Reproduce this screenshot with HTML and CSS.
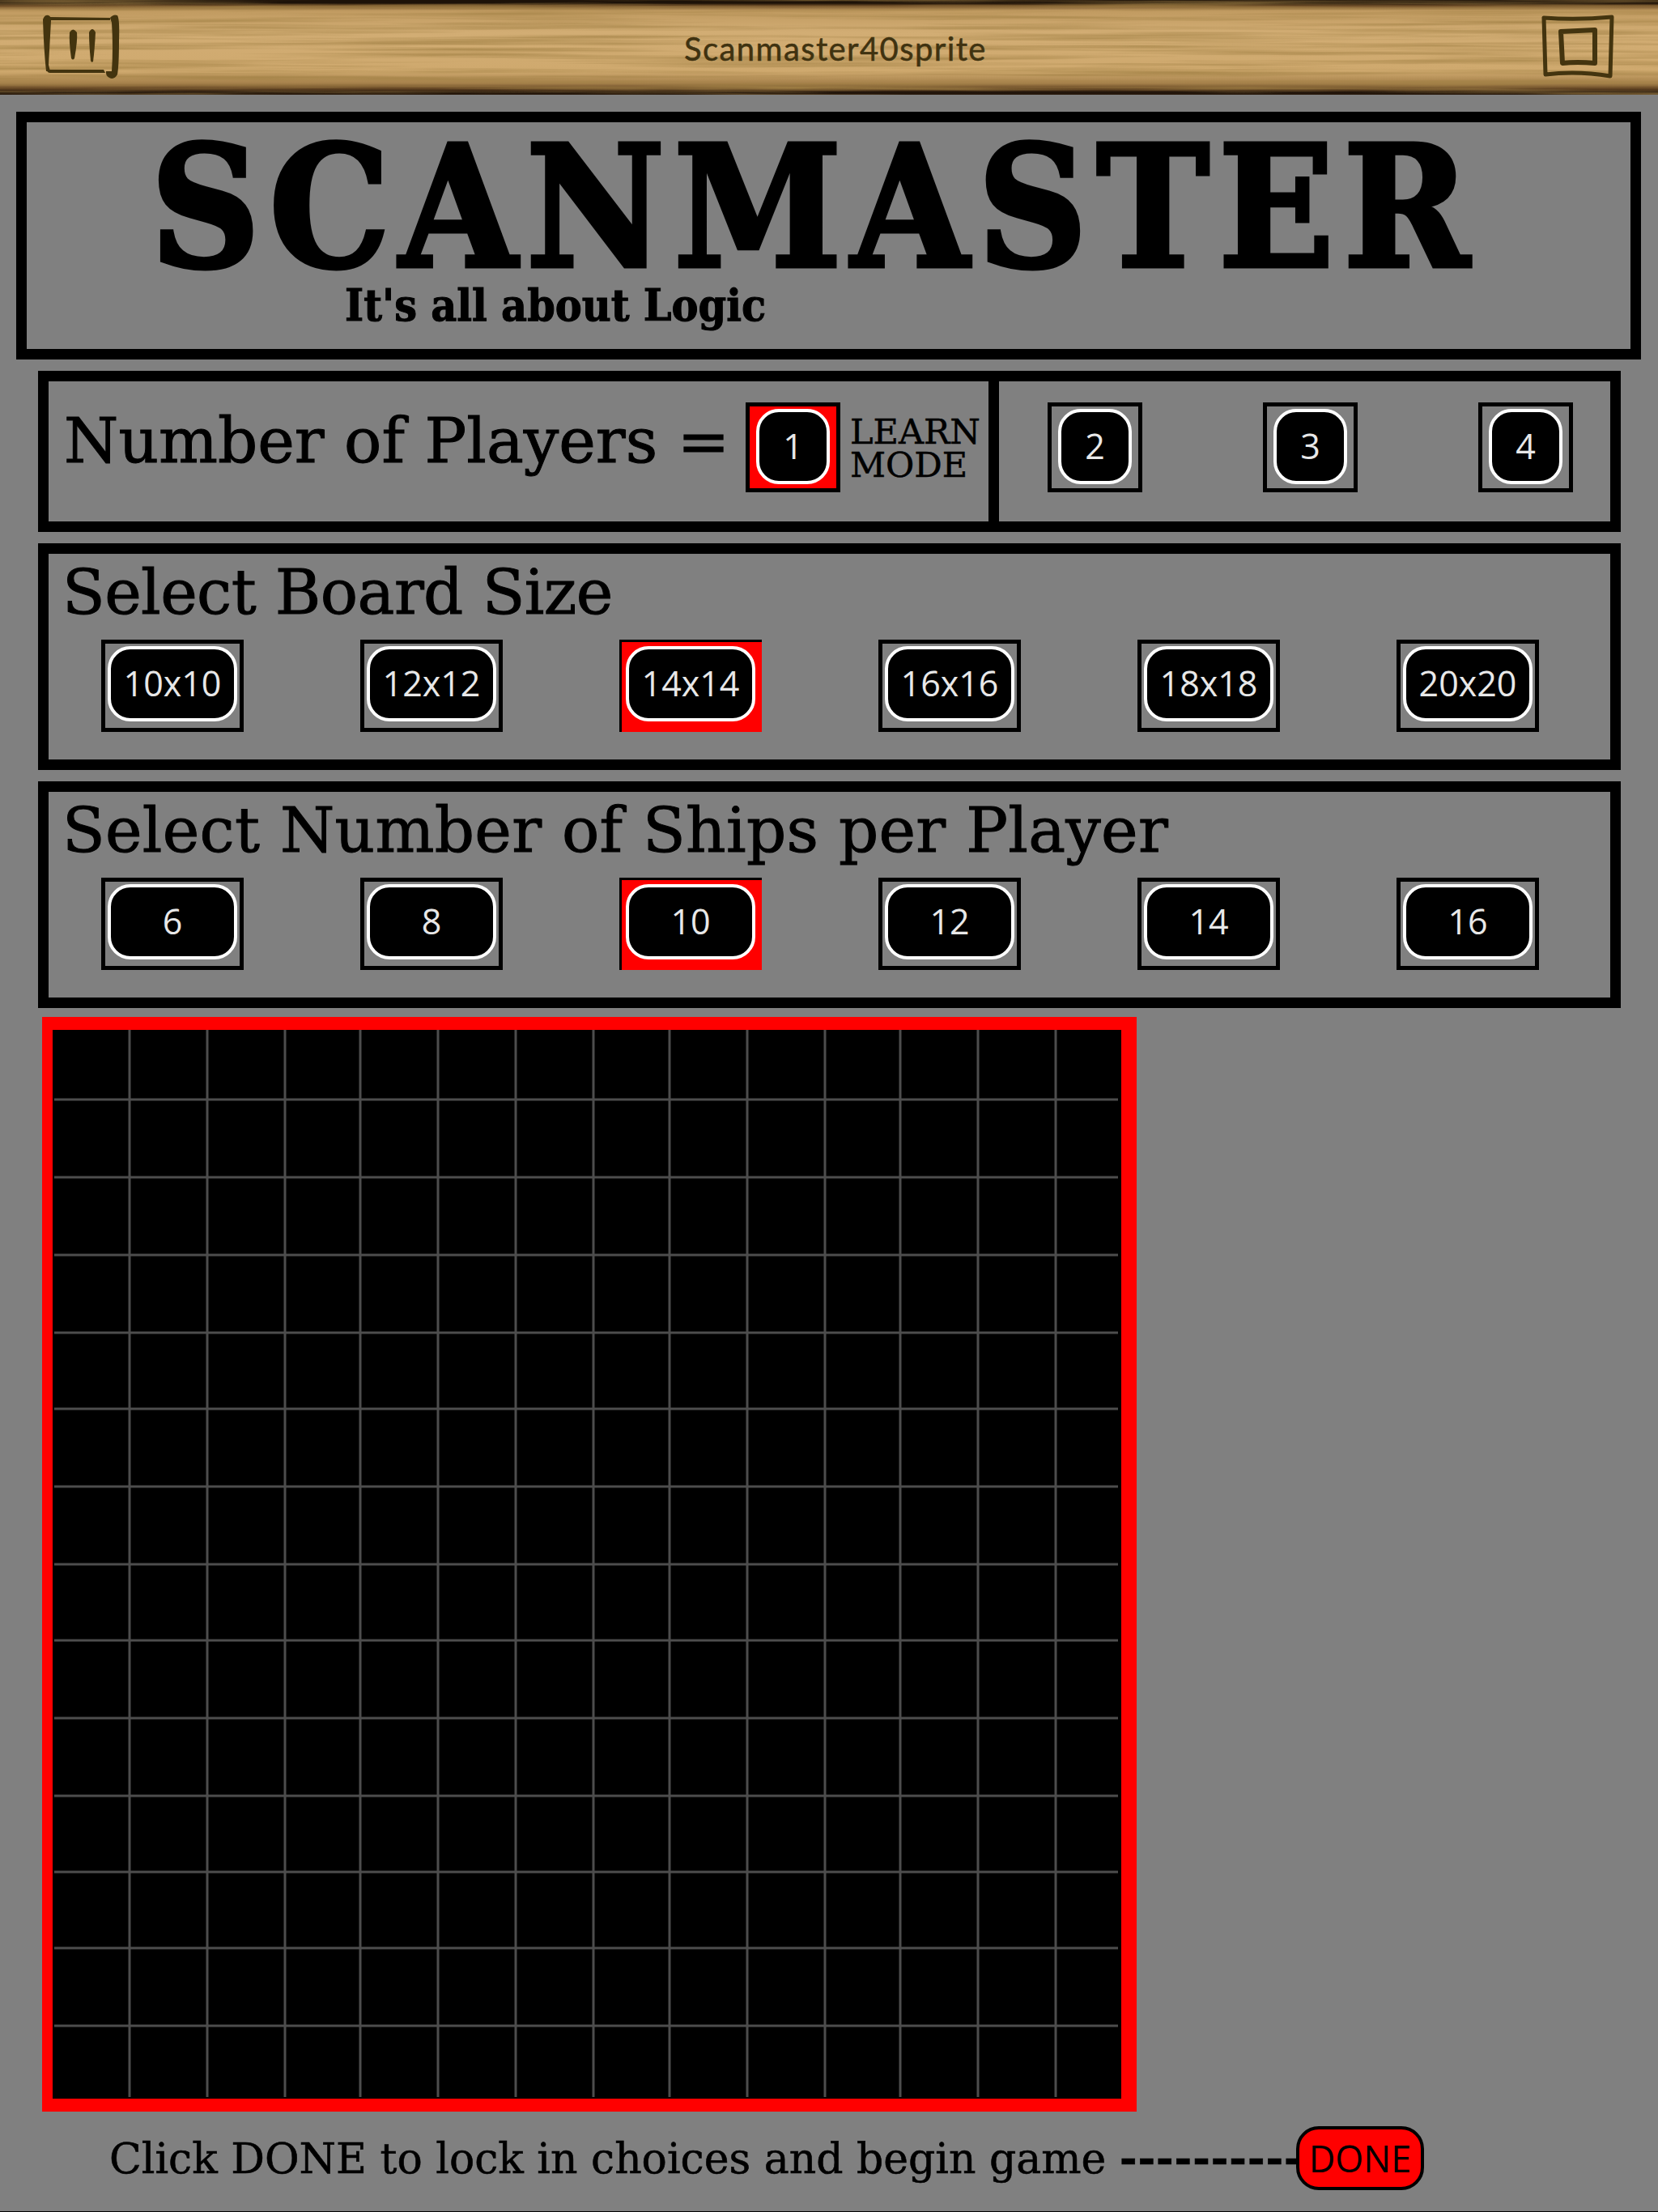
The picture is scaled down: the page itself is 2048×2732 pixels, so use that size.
FILE: index.html
```html
<!DOCTYPE html>
<html lang="en">

<head>
  <meta charset="UTF-8">
  <title>Scanmaster</title>
  <link rel="stylesheet" href="styles.css">
</head>

<body>

  <div class="top-bar">
    <svg class="wood" width="2048" height="117" aria-hidden="true">
      <filter id="grain" x="0" y="0" width="100%" height="100%">
        <feTurbulence type="fractalNoise" baseFrequency="0.0025 0.16" numOctaves="4" seed="11" />
        <feColorMatrix type="matrix" values="0 0 0 0 0.36  0 0 0 0 0.22  0 0 0 0 0.06  1.7 0 0 0 -0.68" />
      </filter>
      <rect width="2048" height="117" filter="url(#grain)" />
    </svg>
    <svg class="bar-icon" viewBox="50 15 100 85" aria-label="Pause">
      <path d="M53 24Q55 18 60 19Q64 21 63 26L60 80L62 88L57 88Q54 60 53 24Z" />
      <path d="M60 21L136 22L136 25L62 25Z" />
      <path d="M136 22Q140 17 145 19Q148 24 147 50Q147 80 145 92Q141 99 135 96Q130 93 131 88L138 88Q140 60 138 28Z" />
      <path d="M58 86L128 86L130 90L62 90Q58 90 58 86Z" />
      <path d="M86 40Q90 33 95 40Q96 50 92 72Q90 75 88 72Q85 50 86 40Z" />
      <path d="M110 40Q114 32 118 40Q117 60 115 76Q113 78 112 75Q110 55 110 40Z" />
    </svg>
    <div class="bar-title">Scanmaster40sprite</div>
    <svg class="bar-icon" viewBox="50 15 100 85" aria-label="Window">
      <path class="line" stroke-width="5" d="M59 22Q100 25 143 21L141 94Q100 87 61 92Z" />
      <path class="line" stroke-width="6" d="M80 39Q100 38 122 37L122 78Q100 76 82 78Z" />
    </svg>
  </div>

  <div class="title-box">
    <h1>SCANMASTER</h1>
    <div class="tagline">It's all about Logic</div>
  </div>

  <div class="panels">
    <div class="panel players">
      <div class="players-left">
        <div class="heading">Number of Players =</div>
        <div class="frame frame-square selected-full"><button class="btn">1</button></div>
        <div class="learn">LEARN<br>MODE</div>
      </div>
      <div class="players-right">
        <div class="frame frame-square"><button class="btn">2</button></div>
        <div class="frame frame-square"><button class="btn">3</button></div>
        <div class="frame frame-square"><button class="btn">4</button></div>
      </div>
    </div>

    <div class="panel">
      <div class="heading heading-board">Select Board Size</div>
      <div class="options">
        <div class="frame"><button class="btn">10x10</button></div>
        <div class="frame"><button class="btn">12x12</button></div>
        <div class="frame selected"><button class="btn">14x14</button></div>
        <div class="frame"><button class="btn">16x16</button></div>
        <div class="frame"><button class="btn">18x18</button></div>
        <div class="frame"><button class="btn">20x20</button></div>
      </div>
    </div>

    <div class="panel">
      <div class="heading heading-ships">Select Number of Ships per Player</div>
      <div class="options">
        <div class="frame"><button class="btn">6</button></div>
        <div class="frame"><button class="btn">8</button></div>
        <div class="frame selected"><button class="btn">10</button></div>
        <div class="frame"><button class="btn">12</button></div>
        <div class="frame"><button class="btn">14</button></div>
        <div class="frame"><button class="btn">16</button></div>
      </div>
    </div>
  </div>

  <div class="board">
    <svg class="grid" width="1320" height="1319" viewBox="65 1272 1320 1319" aria-hidden="true">
      <path d="M160 1272V2590M256 1272V2590M352 1272V2590M445 1272V2590M541 1272V2590M637 1272V2590M733 1272V2590M827 1272V2590M923 1272V2590M1019 1272V2590M1112 1272V2590M1208 1272V2590M1304 1272V2590" />
      <path d="M67 1358H1381M67 1454H1381M67 1550H1381M67 1646H1381M67 1740H1381M67 1836H1381M67 1932H1381M67 2026H1381M67 2122H1381M67 2218H1381M67 2312H1381M67 2406H1381M67 2502H1381" />
    </svg>
  </div>

  <div class="footer">
    <span class="footer-text">Click DONE to lock in choices and begin game <span class="dashes">----------</span></span>
    <button class="done">DONE</button>
  </div>

</body>

</html>
```

FILE: styles.css
```css
* {
  box-sizing: border-box;
}

html,
body {
  margin: 0;
  padding: 0;
}

body {
  height: 2732px;
  overflow: hidden;
  background-color: #808080;
  border-bottom: 1px solid #000;
  font-family: "DejaVu Serif", serif;
  color: #000;
}

/* top bar */
.top-bar {
  position: relative;
  display: flex;
  justify-content: space-between;
  align-items: flex-start;
  height: 117px;
  padding: 15px 50px 0;
  background: linear-gradient(180deg, #1d1208 0, #1d1208 4px, #6b4a25 7px, #c09a60 13px, #d2ad74 40px, #cfa96e 88px, #a5804a 103px, #5e4020 110px, #1f130a 114px, #2a1a0c 117px);
  overflow: hidden;
}

.wood {
  position: absolute;
  top: 0;
  left: 0;
}

.bar-icon {
  position: relative;
  width: 100px;
  height: 85px;
  fill: #43340f;
}

.bar-icon .line {
  fill: none;
  stroke: #43340f;
  stroke-linejoin: round;
}

.bar-title {
  position: relative;
  margin-top: 20px;
  margin-left: 16px;
  font-family: Lato, sans-serif;
  font-size: 40px;
  line-height: 50px;
  letter-spacing: 1.4px;
  color: #3f3210;
  -webkit-text-stroke: 0.5px #3f3210;
}

/* title */
.title-box {
  width: 2007px;
  height: 306px;
  margin: 21px 0 0 20px;
  padding: 0 0 0 153px;
  border: 13px solid #000;
}

h1 {
  margin: 0;
  font-size: 208px;
  font-stretch: condensed;
  font-weight: 700;
  line-height: 210px;
  letter-spacing: 11.5px;
  -webkit-text-stroke: 5px #000;
}

.tagline {
  margin: -14px 0 0 240px;
  font-size: 55px;
  font-stretch: condensed;
  font-weight: 700;
  line-height: 60px;
  -webkit-text-stroke: 1px #000;
}

/* option panels */
.panels {
  display: flex;
  flex-direction: column;
  gap: 14px;
  width: 1955px;
  margin: 14px 0 0 47px;
}

.panel {
  height: 280px;
  padding: 0 0 0 17px;
  border: 13px solid #000;
}

.heading {
  padding-top: 3px;
  font-size: 77px;
  line-height: 90px;
  white-space: nowrap;
  -webkit-text-stroke: 1px #000;
}

.heading-board {
  letter-spacing: -0.6px;
}

.heading-ships {
  letter-spacing: 0.27px;
}

.options {
  display: flex;
  gap: 144px;
  margin: 13px 0 0 48px;
}

.frame {
  flex: none;
  width: 176px;
  height: 114px;
  padding: 3px;
  border: 5px solid #000;
}

.frame-square {
  width: 117px;
  height: 111px;
  padding: 3px 8px;
}

.selected {
  padding: 5px 0 0 5px;
  border-width: 3px 0 0 3px;
  background-color: #f00;
}

.selected-full {
  background-color: #f00;
}

.btn {
  display: block;
  width: 100%;
  height: 93px;
  padding: 0 0 2px;
  background-color: #000;
  border: 4px solid #fff;
  border-radius: 28px;
  font-family: "Open Sans", sans-serif;
  font-size: 43px;
  line-height: 1;
  color: #e8e8e8;
}

.selected .btn {
  width: 160px;
}

/* players panel */
.players {
  display: flex;
  height: 199px;
  padding: 0;
}

.players-left {
  display: flex;
  align-items: flex-start;
  width: 1174px;
  padding: 26px 0 0 19px;
  border-right: 13px solid #000;
}

.players-left .heading {
  width: 842px;
}

.learn {
  margin: 16px 0 0 12px;
  font-size: 43px;
  line-height: 41px;
  -webkit-text-stroke: 0.5px #000;
}

.players-right {
  display: flex;
  gap: 149px;
  padding: 26px 0 0 60px;
}

/* game board */
.board {
  width: 1352px;
  height: 1352px;
  margin: 11px 0 0 52px;
  padding: 0;
  background-color: #000;
  border: solid #f00;
  border-width: 16px 19px 16px 13px;
}

.grid {
  display: block;
  fill: none;
  stroke: #4d4d4d;
  stroke-width: 3;
}

/* footer */
.footer {
  display: flex;
  align-items: center;
  height: 79px;
  margin: 18px 0 0 135px;
}

.footer-text {
  width: 1466px;
  font-size: 52px;
  white-space: nowrap;
  -webkit-text-stroke: 0.6px #000;
}

.dashes {
  font-weight: 700;
  letter-spacing: 1px;
}

.done {
  width: 158px;
  height: 79px;
  padding: 0;
  background-color: #f00;
  border: 4px solid #000;
  border-radius: 28px;
  font-family: "Open Sans", sans-serif;
  font-size: 45px;
  color: #000;
}
```
